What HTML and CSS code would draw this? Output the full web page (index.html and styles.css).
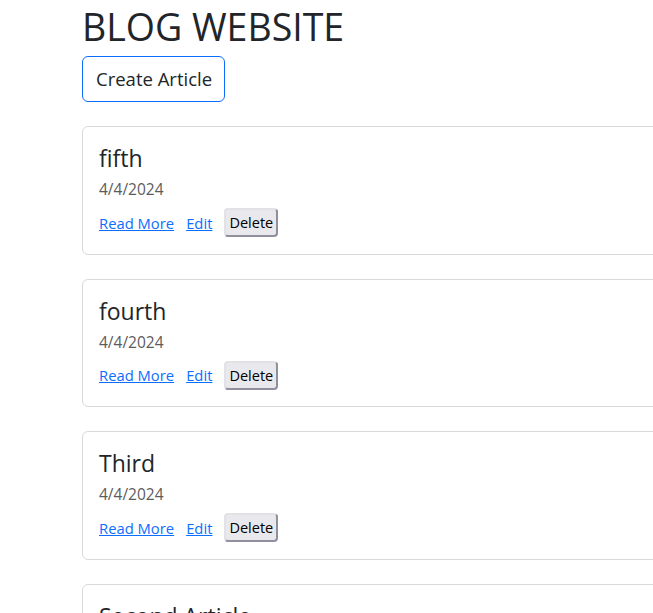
FILE: index.html
```html
<!DOCTYPE html>
<html>
<head>
<meta charset="utf-8">
<link rel="stylesheet" href="styles.css">
</head>
<body>
<div class="page">
  <h1 class="site-title">BLOG WEBSITE</h1>
  <a class="btn-create" href="#">Create Article</a>
  <div class="articles">
    <div class="card">
      <h4 class="card-title">fifth</h4>
      <div class="card-date">4/4/2024</div>
      <div class="card-actions">
        <a href="#" class="link">Read More</a>
        <a href="#" class="link">Edit</a>
        <button class="btn-delete">Delete</button>
      </div>
    </div>
    <div class="card">
      <h4 class="card-title">fourth</h4>
      <div class="card-date">4/4/2024</div>
      <div class="card-actions">
        <a href="#" class="link">Read More</a>
        <a href="#" class="link">Edit</a>
        <button class="btn-delete">Delete</button>
      </div>
    </div>
    <div class="card">
      <h4 class="card-title">Third</h4>
      <div class="card-date">4/4/2024</div>
      <div class="card-actions">
        <a href="#" class="link">Read More</a>
        <a href="#" class="link">Edit</a>
        <button class="btn-delete">Delete</button>
      </div>
    </div>
    <div class="card">
      <h4 class="card-title">Second Article</h4>
      <div class="card-date">4/4/2024</div>
      <div class="card-actions">
        <a href="#" class="link">Read More</a>
        <a href="#" class="link">Edit</a>
        <button class="btn-delete">Delete</button>
      </div>
    </div>
  </div>
</div>
</body>
</html>
```

FILE: styles.css
```css
html, body {
  margin: 0;
  padding: 0;
  overflow: hidden;
  background: #fff;
}
body {
  font-family: "Open Sans", "Noto Sans", sans-serif;
  color: #212529;
  font-size: 16px;
}
.page {
  padding-left: 82px;
  width: 720px;
}
.site-title {
  margin: 3px 0 5px 0;
  font-size: 37.5px;
  font-weight: 400;
  line-height: 48px;
  letter-spacing: 0;
}
.btn-create {
  display: inline-block;
  box-sizing: border-box;
  height: 46px;
  padding: 0 12px 0 13px;
  border: 1px solid #0d6efd;
  border-radius: 6px;
  color: #212529;
  text-decoration: none;
  font-size: 18.5px;
  line-height: 44px;
}
.articles {
  margin-top: 24px;
  display: flex;
  flex-direction: column;
  gap: 24.2px;
}
.card {
  border: 1px solid #d9d9d9;
  border-radius: 6px;
  padding: 16px 16px 16.5px 16px;
  display: flex;
  flex-direction: column;
}
.card-title {
  margin: 0 0 6px 0;
  font-size: 23px;
  font-weight: 400;
  line-height: 30px;
}
.card-date {
  font-size: 15.5px;
  color: #5c5c5c;
  line-height: 20px;
  margin-bottom: 9px;
}
.card-actions {
  display: flex;
  align-items: center;
  gap: 12px;
}
.link {
  color: #0d6efd;
  font-size: 14.8px;
  text-decoration: underline;
}
.btn-delete {
  font-family: inherit;
  font-size: 14.5px;
  color: #000;
  background: #e9e9ed;
  border: 2px solid #8f8f9d;
  border-top-color: #e2e2e6;
  border-left-color: #e2e2e6;
  border-radius: 4px;
  height: 29px;
  padding: 0 3px;
}
```
